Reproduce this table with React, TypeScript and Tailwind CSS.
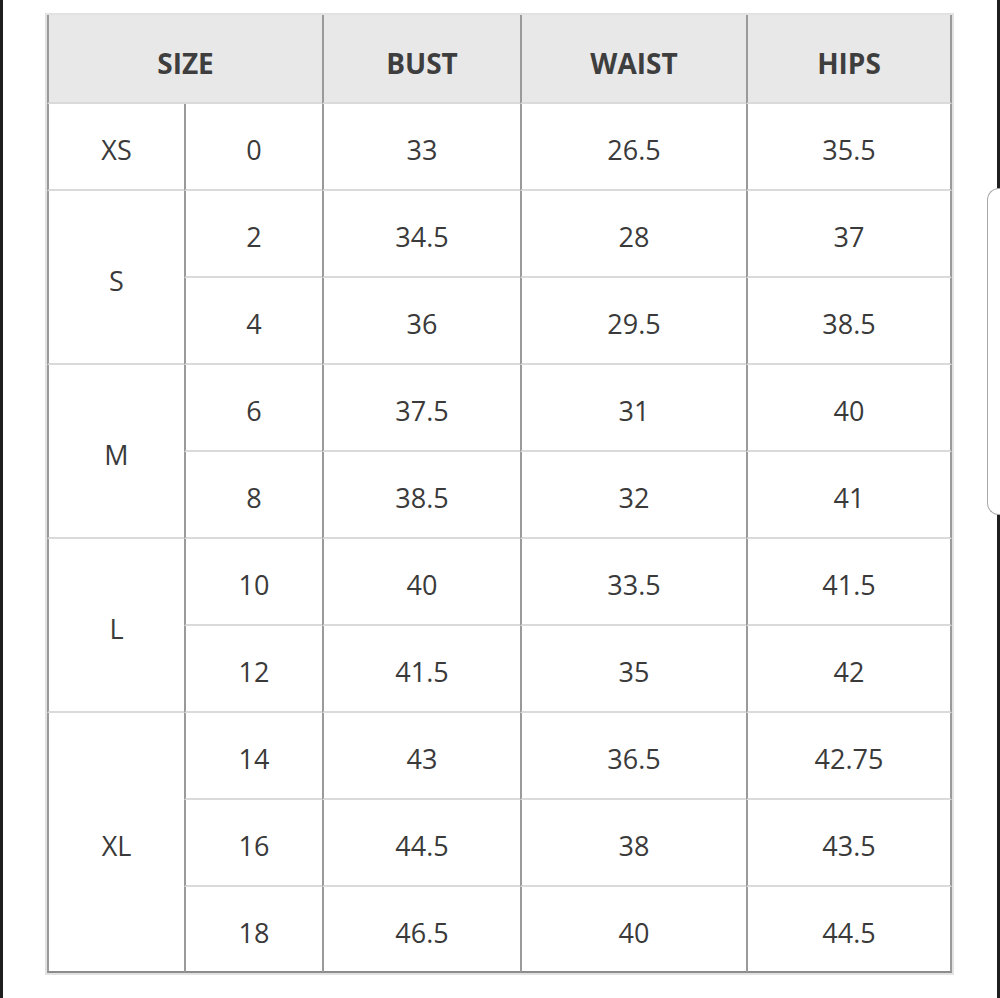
import React from 'react';

type Row = { size?: string; span?: number; num: string; bust: string; waist: string; hips: string };

const rows: Row[] = [
    { size: 'XS', span: 1, num: '0', bust: '33', waist: '26.5', hips: '35.5' },
    { size: 'S', span: 2, num: '2', bust: '34.5', waist: '28', hips: '37' },
    { num: '4', bust: '36', waist: '29.5', hips: '38.5' },
    { size: 'M', span: 2, num: '6', bust: '37.5', waist: '31', hips: '40' },
    { num: '8', bust: '38.5', waist: '32', hips: '41' },
    { size: 'L', span: 2, num: '10', bust: '40', waist: '33.5', hips: '41.5' },
    { num: '12', bust: '41.5', waist: '35', hips: '42' },
    { size: 'XL', span: 3, num: '14', bust: '43', waist: '36.5', hips: '42.75' },
    { num: '16', bust: '44.5', waist: '38', hips: '43.5' },
    { num: '18', bust: '46.5', waist: '40', hips: '44.5' },
];

const font = { fontFamily: '"Open Sans", "DejaVu Sans", sans-serif' };

export default function App() {
    const last = rows.length - 1;

    return (
        <div className="relative flex h-[998px] w-[1000px] bg-white" style={font}>
            <div className="h-full w-[3px] bg-[#1f1f1f]" />
            <div className="flex-1 pl-[42px] pt-[13px]">
                <div className="w-[909px] border-2 border-[#e2e2e2]">
                    <table className="w-[905px] table-fixed border-separate border-spacing-0 text-center">
                        <colgroup>
                            <col className="w-[137px]" />
                            <col className="w-[138px]" />
                            <col className="w-[198px]" />
                            <col className="w-[226px]" />
                            <col className="w-[206px]" />
                        </colgroup>
                        <thead>
                            <tr className="bg-[#e8e8e8] text-[28px] font-bold text-[#3e3e3e]">
                                <th colSpan={2} className="h-[89px] border-b-2 border-l-2 border-b-[#dadada] border-l-[#9a9a9a] pt-[8px] align-middle">SIZE</th>
                                <th className="h-[89px] border-b-2 border-l-2 border-b-[#dadada] border-l-[#9a9a9a] pt-[8px] align-middle">BUST</th>
                                <th className="h-[89px] border-b-2 border-l-2 border-b-[#dadada] border-l-[#9a9a9a] pt-[8px] align-middle">WAIST</th>
                                <th className="h-[89px] border-x-2 border-b-2 border-b-[#dadada] border-x-[#9a9a9a] pt-[8px] align-middle">HIPS</th>
                            </tr>
                        </thead>
                        <tbody className="text-[27px] text-[#3a3a3a]">
                            {rows.map((r, i) => {
                                const bottom = i === last ? 'border-b-[#8c8c8c]' : 'border-b-[#dadada]';
                                const h = i === last ? 'h-[86px]' : 'h-[87px]';
                                const sizeBottom = r.span && i + r.span - 1 === last ? 'border-b-[#8c8c8c]' : 'border-b-[#dadada]';
                                return (
                                    <tr key={i}>
                                        {r.size && (
                                            <td rowSpan={r.span} className={`border-b-2 border-l-2 border-l-[#9a9a9a] pt-[8px] align-middle ${sizeBottom}`}>
                                                {r.size}
                                            </td>
                                        )}
                                        <td className={`${h} border-b-2 border-l-2 border-l-[#9a9a9a] pt-[8px] align-middle ${bottom}`}>{r.num}</td>
                                        <td className={`${h} border-b-2 border-l-2 border-l-[#9a9a9a] pt-[8px] align-middle ${bottom}`}>{r.bust}</td>
                                        <td className={`${h} border-b-2 border-l-2 border-l-[#9a9a9a] pt-[8px] align-middle ${bottom}`}>{r.waist}</td>
                                        <td className={`${h} border-x-2 border-b-2 border-x-[#9a9a9a] pt-[8px] align-middle ${bottom}`}>{r.hips}</td>
                                    </tr>
                                );
                            })}
                        </tbody>
                    </table>
                </div>
            </div>
            <div className="h-full w-[3px] bg-[#1f1f1f]" />
            {/* scroll handle */}
            <div className="absolute right-0 top-[188px] h-[327px] w-[13px] rounded-l-[12px] border border-r-0 border-[#a8a8a8] bg-white" />
        </div>
    );
}
